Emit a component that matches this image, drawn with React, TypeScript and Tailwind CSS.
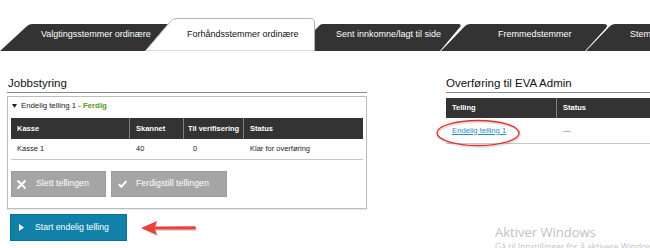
import React from "react";

function DarkTab({
  w,
  path,
  label,
  pl,
  className = "",
}: {
  w: number;
  path: string;
  label: string;
  pl: string;
  className?: string;
}) {
  return (
    <div className={`relative mt-[6px] h-[27px] shrink-0 ${className}`} style={{ width: w }}>
      <svg className="absolute inset-0" width={w} height={27} viewBox={`0 0 ${w} 27`}>
        <path d={path} fill="#333333" />
      </svg>
      <div className={`relative flex h-full items-center pb-[5px] text-[9px] text-white whitespace-nowrap ${pl}`}>
        {label}
      </div>
    </div>
  );
}

export default function App() {
  return (
    <div className="relative h-[248px] w-[650px] overflow-hidden bg-white font-['Liberation_Sans',Arial,sans-serif] text-[#222]">
      {/* Tabs */}
      <div className="flex items-start pt-[18px]">
        <DarkTab
          w={168}
          path="M0,27 L26,3 Q28.5,0 32,0 L168,0 L145,27 Z"
          label="Valgtingsstemmer ordinære"
          pl="pl-[41px]"
        />
        <div className="relative ml-[-23px] h-[33px] w-[170px] shrink-0">
          <svg className="absolute inset-0" width={170} height={33} viewBox="0 0 170 33">
            <path
              d="M0.5,33 L25.5,3.5 Q28,0.5 32,0.5 L165,0.5 Q169.5,0.5 169.5,5 L169.5,33 Z"
              fill="#ffffff"
              stroke="#b4b4b4"
              strokeWidth={1}
            />
          </svg>
          <div className="relative flex h-full items-center pl-[42px] text-[9px] text-[#111] whitespace-nowrap">
            Forhåndsstemmer ordinære
          </div>
        </div>
        <DarkTab
          w={146}
          path="M0,27 L0,6 L5,1 Q6,0 8,0 L143,0 Q147,0 145,3 L125,27 Z"
          label="Sent innkomne/lagt til side"
          pl="pl-[21px]"
        />
        <DarkTab
          w={168}
          path="M0,27 L23,3 Q25.5,0 29,0 L163,0 Q168,0 165,4 L144,27 Z"
          label="Fremmedstemmer"
          pl="pl-[57px]"
          className="ml-[-20px]"
        />
        <DarkTab
          w={200}
          path="M0,27 L23,3 Q25.5,0 29,0 L200,0 L200,27 Z"
          label="Stemmer"
          pl="pl-[44px]"
          className="ml-[-23px]"
        />
      </div>

      {/* Content */}
      <div className="flex pl-[7px]">
        {/* Left column */}
        <div className="w-[360px] shrink-0">
          <div className="mt-[26px] border-b border-[#8a8a8a] pb-[2px] pl-[1px] text-[11.5px] leading-[13px] text-[#111]">
            Jobbstyring
          </div>
          <div className="mt-[3px] border border-[#bcbcbc] px-[3px] pb-[11px] shadow-[0_1px_1px_rgba(0,0,0,0.08)]">
            <div className="flex h-[21px] items-center gap-[4px] pb-[3px] pl-[1px] text-[7.8px] text-[#222]">
              <svg width="5" height="4" viewBox="0 0 5 4">
                <path d="M0,0 L5,0 L2.5,4 Z" fill="#222" />
              </svg>
              <span>
                Endelig telling 1 - <span className="font-bold text-[#4f9a1d]">Ferdig</span>
              </span>
            </div>
            <div className="grid h-[21px] grid-cols-[119px_54px_60px_1fr] bg-[#333333] text-[7.5px] font-bold text-white">
              <div className="flex items-center border-r border-[#808080] pl-[6px]">Kasse</div>
              <div className="flex items-center border-r border-[#808080] pl-[6px]">Skannet</div>
              <div className="flex items-center border-r border-[#808080] pl-[4px]">Til verifisering</div>
              <div className="flex items-center pl-[6px]">Status</div>
            </div>
            <div className="grid h-[21px] grid-cols-[119px_54px_60px_1fr] border-b border-[#c8c8c8] text-[7.5px] text-[#222]">
              <div className="flex items-center pl-[6px]">Kasse 1</div>
              <div className="flex items-center pl-[6px]">40</div>
              <div className="flex items-center pl-[9px]">0</div>
              <div className="flex items-center pl-[6px]">Klar for overføring</div>
            </div>
            <div className="mt-[11px] flex gap-[5px]">
              <div className="flex h-[26px] w-[95px] items-center gap-[10px] border border-[#9c9c9c] bg-[#a5a5a5] pl-[5px] text-[8.8px] text-white">
                <svg width="9" height="9" viewBox="0 0 9 9">
                  <path d="M1.2,1.2 L7.8,7.8 M7.8,1.2 L1.2,7.8" stroke="#fff" strokeWidth="2.2" strokeLinecap="square" />
                </svg>
                <span>Slett tellingen</span>
              </div>
              <div className="flex h-[26px] w-[116px] items-center gap-[9px] border border-[#9c9c9c] bg-[#a5a5a5] pl-[6px] text-[8.8px] text-white">
                <svg width="9" height="8" viewBox="0 0 9 8">
                  <path d="M0.8,4.3 L3.3,6.8 L8.3,1.2" stroke="#fff" strokeWidth="2" fill="none" />
                </svg>
                <span>Ferdigstill tellingen</span>
              </div>
            </div>
          </div>
          <div className="ml-[3px] mt-[5px] flex h-[27px] w-[117px] items-center gap-[11px] border border-[#0a6f93] bg-[#1181a9] pl-[8px] text-[8.7px] text-white">
            <svg width="5" height="7" viewBox="0 0 5 7">
              <path d="M0,0 L5,3.5 L0,7 Z" fill="#fff" />
            </svg>
            <span>Start endelig telling</span>
          </div>
        </div>

        {/* Right column */}
        <div className="ml-[79px] flex-1">
          <div className="mt-[26px] border-b border-[#8a8a8a] pb-[2px] text-[11.5px] leading-[13px] text-[#111]">
            Overføring til EVA Admin
          </div>
          <div className="mt-[5px] grid h-[20px] grid-cols-[111px_1fr] bg-[#333333] text-[7.5px] font-bold text-white">
            <div className="flex items-center border-r border-[#808080] pl-[6px]">Telling</div>
            <div className="flex items-center pl-[6px]">Status</div>
          </div>
          <div className="grid h-[26px] grid-cols-[111px_1fr] border-b border-[#c8c8c8] text-[7.7px]">
            <div className="flex items-center pl-[6px] text-[#2a8bc2] underline">Endelig telling 1</div>
            <div className="flex items-center pl-[6px] text-[#555]">---</div>
          </div>
        </div>
      </div>

      {/* Red ellipse annotation */}
      <svg className="absolute left-[434px] top-[117px]" width="88" height="32" viewBox="0 0 88 32">
        <ellipse cx="44" cy="16" rx="41" ry="12.5" fill="none" stroke="rgba(0,0,0,0.12)" strokeWidth="2" transform="translate(1,1.5)" />
        <ellipse cx="44" cy="16" rx="41" ry="12.5" fill="none" stroke="#e2332f" strokeWidth="1.4" />
      </svg>

      {/* Red arrow annotation */}
      <svg className="absolute left-[138px] top-[219px]" width="64" height="20" viewBox="0 0 64 20">
        <g transform="translate(1,1.5)" opacity="0.15">
          <path d="M3,9 L19,2 L17,7.5 L57,7.2 Q59,8.7 57,10.5 L17,10.5 L19,16 Z" fill="#000" />
        </g>
        <path d="M3,9 L19,2 L17,7.5 L57,7.2 Q59,8.7 57,10.5 L17,10.5 L19,16 Z" fill="#e8423f" />
      </svg>

      {/* Windows activation watermark */}
      <div className="absolute left-[495px] top-[224px] font-['Open_Sans','Noto_Sans',sans-serif] text-[#c2c2c2]">
        <div className="text-[13px] leading-[17px] whitespace-nowrap">Aktiver Windows</div>
        <div className="text-[8.5px] leading-[11px] whitespace-nowrap">Gå til Innstillinger for å aktivere Windows.</div>
      </div>
    </div>
  );
}
